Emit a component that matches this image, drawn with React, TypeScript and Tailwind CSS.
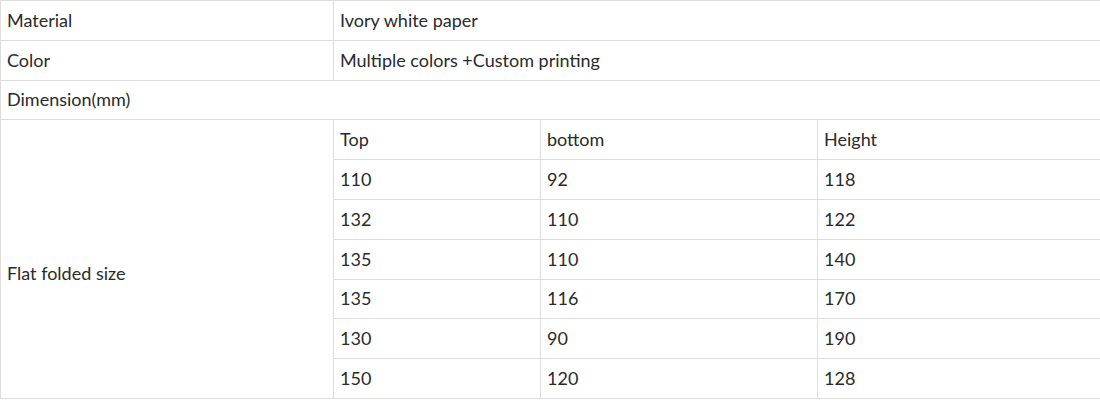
export default function App() {
  const rows = [
    ["Top", "bottom", "Height"],
    ["110", "92", "118"],
    ["132", "110", "122"],
    ["135", "110", "140"],
    ["135", "116", "170"],
    ["130", "90", "190"],
    ["150", "120", "128"],
  ];
  const td = "border border-[#dddddd] px-[6px] py-0 h-[39.8px] align-middle text-left";
  return (
    <div className="bg-white w-[1100px]" style={{ fontFamily: "Lato, 'Open Sans', sans-serif" }}>
      <table className="w-[1100px] border-collapse table-fixed text-[18px] leading-[27px] text-[#2a2a2a]">
        <colgroup>
          <col className="w-[333px]" />
          <col className="w-[207px]" />
          <col className="w-[277px]" />
          <col className="w-[283px]" />
        </colgroup>
        <tbody>
          <tr>
            <td className={td}>Material</td>
            <td className={td} colSpan={3}>Ivory white paper</td>
          </tr>
          <tr>
            <td className={td}>Color</td>
            <td className={td} colSpan={3}>Multiple colors +Custom printing</td>
          </tr>
          <tr>
            <td className={td} colSpan={4}>Dimension(mm)</td>
          </tr>
          {rows.map((r, i) => (
            <tr key={i}>
              {i === 0 && (
                <td className={td + " pt-[29px]"} rowSpan={7}>Flat folded size</td>
              )}
              {r.map((c, j) => (
                <td key={j} className={td}>{c}</td>
              ))}
            </tr>
          ))}
        </tbody>
      </table>
    </div>
  );
}
